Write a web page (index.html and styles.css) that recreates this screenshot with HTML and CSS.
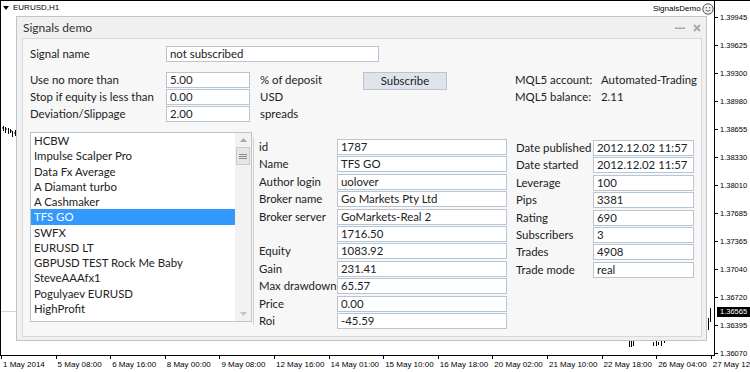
FILE: index.html
```html
<!DOCTYPE html>
<html>
<head>
<meta charset="utf-8">
<link rel="stylesheet" href="styles.css">
</head>
<body>
<div class="chart">
  <div class="plot">
    <div class="symbol"><svg class="tri" width="6" height="4" viewBox="0 0 6 4"><path d="M0 0H6L3 4Z" fill="#000"/></svg><span>EURUSD,H1</span></div>
    <div class="ea"><span>SignalsDemo</span><svg width="12" height="12" viewBox="0 0 12 12"><circle cx="6" cy="6" r="5.2" fill="#f2f2f2" stroke="#555" stroke-width="1"/><circle cx="4.3" cy="4.7" r="0.8" fill="#555"/><circle cx="7.7" cy="4.7" r="0.8" fill="#555"/><path d="M3.6 7.2Q6 9.4 8.4 7.2" stroke="#555" stroke-width="0.9" fill="none"/></svg></div>
  </div>
  <svg class="bars" width="750" height="372" viewBox="0 0 750 372">
    <g stroke="#000" stroke-width="1" fill="none">
      <path d="M3.5 126V131M2 128H3.5M5.5 127V133M5.5 129H7M8.5 128V134M10.5 129V133M10.5 131H12M12.5 131V137M15.5 130V136M14 133H15.5"/>
      <path d="M629.5 341V347M631.5 340V347M633.5 341V346"/>
      <path d="M653.5 342V346M656.5 341V346M658.5 342V345M661.5 341V346M664.5 340V343"/>
      <path d="M710.5 308V322M708.5 318V330"/>
    </g>
    <path d="M1 311.5H16" stroke="#d4d4d4" stroke-width="1"/>
  </svg>
  <div class="price-axis">
    <div class="p">1.39945</div>
    <div class="p">1.39625</div>
    <div class="p">1.39300</div>
    <div class="p">1.38980</div>
    <div class="p">1.38655</div>
    <div class="p">1.38330</div>
    <div class="p">1.38010</div>
    <div class="p">1.37685</div>
    <div class="p">1.37365</div>
    <div class="p">1.37040</div>
    <div class="p">1.36720</div>
    <div class="p">1.36395</div>
    <div class="p">1.36070</div>
  </div>
  <div class="cur-price">1.36565</div>
  <div class="time-axis">
    <div class="t">1 May 2014</div>
    <div class="t">5 May 08:00</div>
    <div class="t">6 May 16:00</div>
    <div class="t">8 May 00:00</div>
    <div class="t">9 May 08:00</div>
    <div class="t">12 May 16:00</div>
    <div class="t">14 May 01:00</div>
    <div class="t">15 May 10:00</div>
    <div class="t">16 May 18:00</div>
    <div class="t">20 May 02:00</div>
    <div class="t">21 May 10:00</div>
    <div class="t">22 May 18:00</div>
    <div class="t">26 May 04:00</div>
    <div class="t">27 May 12:00</div>
  </div>
</div>

<div class="dialog">
  <div class="caption">
    <span class="title">Signals demo</span>
    <svg class="cap-btn" width="10" height="4" viewBox="0 0 10 4"><rect x="0" y="1.5" width="10" height="1.5" fill="#a8a8a8"/></svg>
    <svg class="cap-btn close" width="8" height="8" viewBox="0 0 8 8"><path d="M1 1L7 7M7 1L1 7" stroke="#a8a8a8" stroke-width="1.8"/></svg>
  </div>
  <div class="client">
    <div class="name-row">
      <span class="lbl name-lbl">Signal name</span>
      <div class="edit name-edit">not subscribed</div>
    </div>
    <div class="params">
      <span class="lbl">Use no more than</span>
      <div class="cell"><div class="edit small-edit">5.00</div></div>
      <span class="lbl">% of deposit</span>
      <div class="cell"><div class="btn">Subscribe</div></div>
      <span class="lbl">MQL5 account:</span>
      <span class="lbl">Automated-Trading</span>

      <span class="lbl">Stop if equity is less than</span>
      <div class="cell"><div class="edit small-edit">0.00</div></div>
      <span class="lbl">USD</span>
      <span></span>
      <span class="lbl">MQL5 balance:</span>
      <span class="lbl">2.11</span>

      <span class="lbl">Deviation/Slippage</span>
      <div class="cell"><div class="edit small-edit">2.00</div></div>
      <span class="lbl">spreads</span>
    </div>
    <div class="lower">
      <div class="list">
        <div class="items">
          <div class="item">HCBW</div>
          <div class="item">Impulse Scalper Pro</div>
          <div class="item">Data Fx Average</div>
          <div class="item">A Diamant turbo</div>
          <div class="item">A Cashmaker</div>
          <div class="item sel">TFS GO</div>
          <div class="item">SWFX</div>
          <div class="item">EURUSD LT</div>
          <div class="item">GBPUSD TEST Rock Me Baby</div>
          <div class="item">SteveAAAfx1</div>
          <div class="item">Pogulyaev EURUSD</div>
          <div class="item">HighProfit</div>
        </div>
        <div class="sb">
          <div class="sb-btn"><svg width="7" height="4" viewBox="0 0 7 4"><path d="M0 4L3.5 0L7 4Z" fill="#a9a9a9"/></svg></div>
          <div class="thumb"><svg width="8" height="5" viewBox="0 0 8 5"><path d="M0 0.5H8M0 2.5H8M0 4.5H8" stroke="#8a8a8a" stroke-width="1"/></svg></div>
          <div class="sb-space"></div>
          <div class="sb-btn"><svg width="7" height="4" viewBox="0 0 7 4"><path d="M0 0L3.5 4L7 0Z" fill="#c4c4c4"/></svg></div>
        </div>
      </div>
      <div class="details">
        <div class="grid mid">
          <span class="lbl">id</span><div class="edit">1787</div>
          <span class="lbl">Name</span><div class="edit">TFS GO</div>
          <span class="lbl">Author login</span><div class="edit">uolover</div>
          <span class="lbl">Broker name</span><div class="edit">Go Markets Pty Ltd</div>
          <span class="lbl">Broker server</span><div class="edit">GoMarkets-Real 2</div>
          <span class="lbl"></span><div class="edit">1716.50</div>
          <span class="lbl">Equity</span><div class="edit">1083.92</div>
          <span class="lbl">Gain</span><div class="edit">231.41</div>
          <span class="lbl">Max drawdown</span><div class="edit">65.57</div>
          <span class="lbl">Price</span><div class="edit">0.00</div>
          <span class="lbl">Roi</span><div class="edit">-45.59</div>
        </div>
      </div>
      <div class="grid right">
        <span class="lbl">Date published</span><div class="edit">2012.12.02 11:57</div>
        <span class="lbl">Date started</span><div class="edit">2012.12.02 11:57</div>
        <span class="lbl">Leverage</span><div class="edit">100</div>
        <span class="lbl">Pips</span><div class="edit">3381</div>
        <span class="lbl">Rating</span><div class="edit">690</div>
        <span class="lbl">Subscribers</span><div class="edit">3</div>
        <span class="lbl">Trades</span><div class="edit">4908</div>
        <span class="lbl">Trade mode</span><div class="edit">real</div>
      </div>
    </div>
  </div>
</div>
</body>
</html>
```

FILE: styles.css
```css
* { box-sizing: border-box; }
html, body { margin: 0; padding: 0; }
body {
  width: 750px;
  height: 372px;
  overflow: hidden;
  background: #fff;
  position: relative;
  font-family: "Lato", "Liberation Sans", sans-serif;
  color: #222;
}

/* ---------- chart ---------- */
.chart {
  position: relative;
  width: 750px;
  height: 372px;
  border-top: 1px solid #000;
  font-family: "Liberation Sans", Arial, sans-serif;
  color: #000;
}
.plot {
  position: absolute;
  left: 0;
  top: 0;
  width: 715px;
  height: 355px;
  border-left: 1px solid #000;
  border-right: 1px solid #000;
  border-bottom: 1px solid #000;
}
.symbol {
  position: absolute;
  left: 2px;
  top: 2px;
  display: flex;
  align-items: center;
  gap: 4px;
  font-size: 8px;
  line-height: 10px;
}
.ea {
  position: absolute;
  left: 652px;
  top: 2px;
  display: flex;
  align-items: center;
  gap: 1px;
  font-size: 8px;
  line-height: 12px;
}
.bars {
  position: absolute;
  left: 0;
  top: -1px;
  pointer-events: none;
}
.price-axis {
  position: absolute;
  left: 715px;
  top: 2px;
  width: 35px;
  display: flex;
  flex-direction: column;
}
.p {
  height: 28px;
  display: flex;
  align-items: center;
  font-size: 7.5px;
}
.p::before {
  content: "";
  width: 3px;
  height: 1px;
  background: #000;
  margin-right: 2px;
}
.cur-price {
  position: absolute;
  left: 717px;
  top: 306px;
  width: 33px;
  height: 10px;
  background: #000;
  color: #fff;
  font-size: 7.5px;
  line-height: 10px;
  padding-left: 3px;
}
.time-axis {
  position: absolute;
  left: 1px;
  top: 354px;
  display: flex;
}
.t {
  position: relative;
  flex: 0 0 54.6px;
  padding: 5px 0 0 2px;
  font-size: 8px;
  line-height: 9px;
  white-space: nowrap;
}
.t::before {
  content: "";
  position: absolute;
  left: 0;
  top: 0;
  width: 1px;
  height: 4px;
  background: #000;
}

/* ---------- dialog ---------- */
.dialog {
  position: absolute;
  left: 16px;
  top: 16px;
  width: 691px;
  height: 325px;
  border: 1px solid #c4c4c4;
  background: #f0f0f0;
  display: flex;
  flex-direction: column;
  font-size: 11.4px;
}
.caption {
  height: 21px;
  display: flex;
  align-items: center;
  padding: 0 5px 0 6px;
  gap: 8px;
  font-size: 12px;
  color: #333;
}
.caption .title { flex: 1; }
.client {
  flex: 1;
  margin: 0 4px 3px 5px;
  border: 1px solid #d8d8d8;
  background: #f7f7f7;
  padding: 7px 0 0 7px;
}
.lbl {
  line-height: 16px;
  white-space: nowrap;
}
.edit {
  height: 16px;
  border: 1px solid #b7c5d5;
  background: #fff;
  padding-left: 3px;
  line-height: 14px;
  white-space: nowrap;
  overflow: hidden;
}
.name-row {
  display: flex;
  height: 16px;
}
.name-lbl { width: 136px; }
.name-edit { width: 213px; }

.params {
  margin-top: 10px;
  display: grid;
  grid-template-columns: 136px 94px 103px 152px 86px auto;
  grid-template-rows: repeat(3, 16px);
  row-gap: 1px;
}
.small-edit { width: 84px; }
.btn {
  width: 84px;
  height: 18px;
  border: 1px solid #bac3cf;
  background: #dfe4ec;
  text-align: center;
  line-height: 16px;
}

.lower {
  margin-top: 10px;
  display: flex;
  align-items: flex-start;
}
.list {
  width: 222px;
  height: 190px;
  border: 1px solid #b7c5d5;
  background: #fff;
  display: flex;
}
.items { flex: 1; }
.item {
  height: 15.27px;
  line-height: 15.27px;
  padding-left: 3px;
  white-space: nowrap;
}
.item.sel {
  background: #3399ff;
  color: #fff;
}
.sb {
  width: 16px;
  background: #f2f2f2;
  display: flex;
  flex-direction: column;
  align-items: center;
}
.sb-btn {
  height: 14px;
  display: flex;
  align-items: center;
  justify-content: center;
}
.thumb {
  width: 14px;
  height: 18px;
  border: 1px solid #c9c9c9;
  background: #e6e6e6;
  display: flex;
  align-items: center;
  justify-content: center;
}
.sb-space { flex: 1; }

.details {
  margin: 5px 0 0 1px;
  padding: 2px 0 0 5px;
  height: 188px;
  border-left: 1px solid #d0d0d0;
}
.grid {
  display: grid;
  grid-auto-rows: 16px;
  row-gap: 1.4px;
}
.mid { grid-template-columns: 78px 170px; }
.right {
  margin: 8px 0 0 9px;
  grid-template-columns: 77px 101px;
}
```
